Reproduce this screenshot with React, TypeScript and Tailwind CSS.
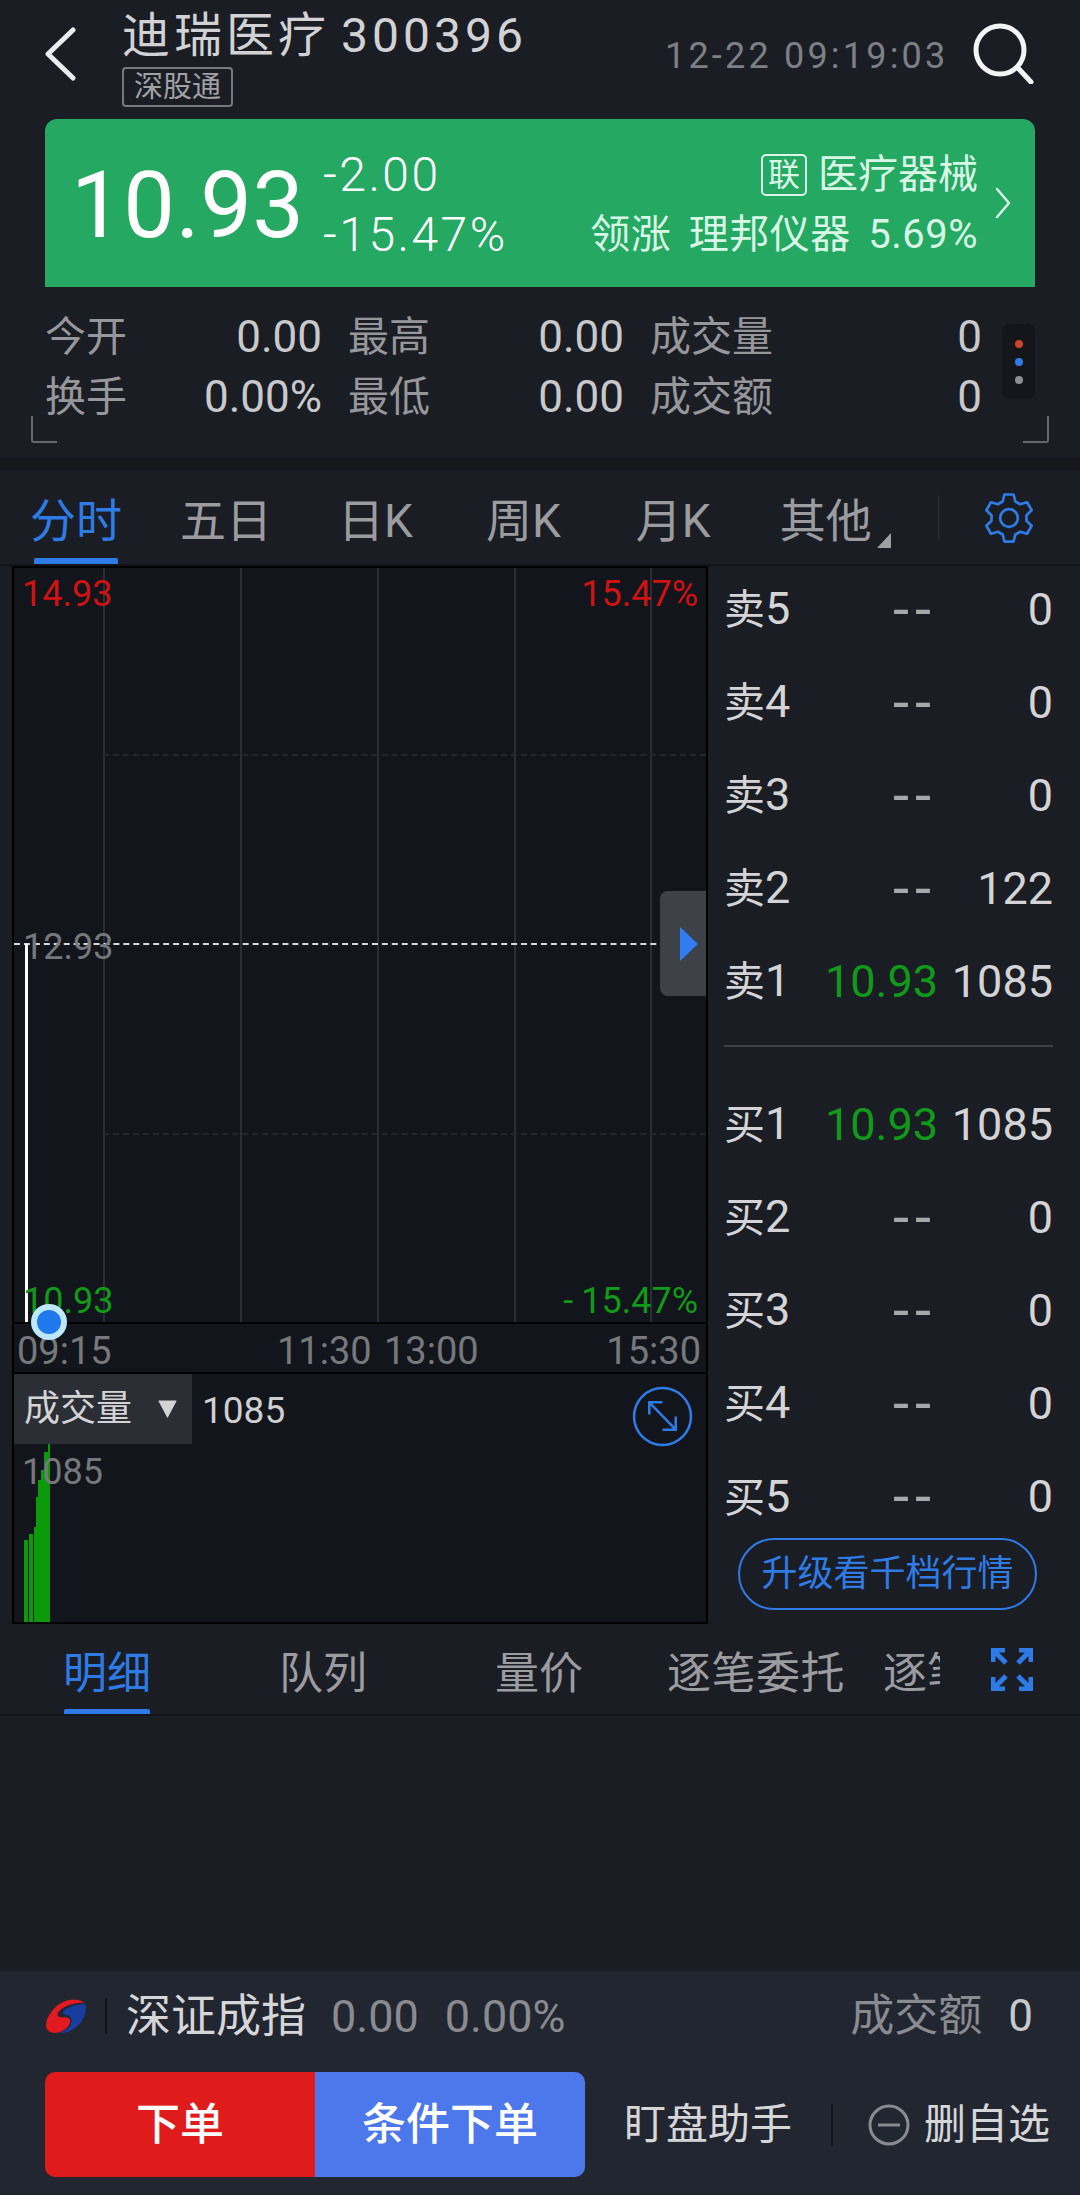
const SELLS = [
  ["卖5", "--", "0"],
  ["卖4", "--", "0"],
  ["卖3", "--", "0"],
  ["卖2", "--", "122"],
  ["卖1", "10.93", "1085"],
];

const BUYS = [
  ["买1", "10.93", "1085"],
  ["买2", "--", "0"],
  ["买3", "--", "0"],
  ["买4", "--", "0"],
  ["买5", "--", "0"],
];

const VOLUME_BARS = [
  [4, 82], [1, 0], [4, 88], [1, 0], [2, 95], [2, 125], [3, 142], [3, 152], [4, 170], [2, 178],
];

// six flat teeth round a centre, same outline as the reference gear
const GEAR_PATH =
  [-90, -30, 30, 90, 150, 210]
    .map((a) => {
      const pt = (deg: number, r: number) => {
        const rad = (deg * Math.PI) / 180;
        return `${(24 + r * Math.cos(rad)).toFixed(2)} ${(24 + r * Math.sin(rad)).toFixed(2)}`;
      };
      return `${pt(a - 21, 17)} L${pt(a - 11, 23)} L${pt(a + 11, 23)} L${pt(a + 21, 17)}`;
    })
    .map((s, i) => (i === 0 ? `M${s}` : `L${s}`))
    .join(" ") + " Z";

function BookRow({ row, short }: { row: string[]; short?: boolean }) {
  const [label, price, vol] = row;
  return (
    <div className={`flex pl-[16px] pr-[27px] text-[45px] leading-[45px] text-[#d4d4d6] ${short ? "h-[70px] items-start pt-[24px]" : "h-[93px] items-center"}`}>
      <span className="w-[101px] shrink-0 whitespace-nowrap text-[41px]">
        {label[0]}
        <span className="text-[45px]">{label[1]}</span>
      </span>
      {price === "--" ? (
        <span className="-mr-[4px] w-[112px] shrink-0 whitespace-nowrap text-right text-[58px] tracking-[6px] text-[#a8a8ab]">--</span>
      ) : (
        <span className="w-[106px] shrink-0 whitespace-nowrap text-right text-[#119a1a]">{price}</span>
      )}
      <span className="flex-1 text-right">{vol}</span>
    </div>
  );
}

function Stat({ label, value }: { label: string; value: string }) {
  return (
    <div className="flex items-center justify-between">
      <span className="text-[41px] text-[#97979b]">{label}</span>
      <span className="text-[44px] text-[#c9c9cc]">{value}</span>
    </div>
  );
}

function Header() {
  return (
    <header className="flex h-[119px] items-start bg-[#1a1d24]">
      <svg className="ml-[44px] mt-[27px] shrink-0" width="32" height="54" viewBox="0 0 32 54" fill="none" stroke="#ececee" strokeWidth="5" strokeLinecap="round" strokeLinejoin="round">
        <path d="M29 3 4 27l25 24" />
      </svg>
      <div className="ml-[46px] w-[480px] pt-[11px]">
        <div className="flex whitespace-nowrap text-[48px] leading-[50px] text-[#d2d2d5]">
          <span className="tracking-[4px]">迪瑞医疗</span>
          <span className="ml-[11px] tracking-[4px]">300396</span>
        </div>
        <div className="mt-[6px] flex h-[40px] w-[111px] items-center justify-center rounded-[4px] border-2 border-[#77797d] text-[29px] leading-none text-[#a1a1a5]">深股通</div>
      </div>
      <div className="ml-[63px] mt-[36px] w-[284px] whitespace-nowrap text-[36px] leading-[40px] tracking-[3.2px] text-[#7e7f84]">12-22 09:19:03</div>
      <svg className="ml-[23px] mt-[22px] shrink-0" width="62" height="62" viewBox="0 0 62 62" fill="none" stroke="#f4f4f5" strokeWidth="5" strokeLinecap="round">
        <circle cx="28" cy="28" r="24" />
        <path d="m46 46 13 14" />
      </svg>
    </header>
  );
}

function QuoteCard() {
  return (
    <section className="mx-[45px] flex h-[168px] items-center rounded-t-[12px] bg-[#24a862] pl-[26px] pr-[24px] text-white">
      <div className="w-[252px] shrink-0 pt-[5px] text-[92px] font-normal leading-none tracking-[0.5px]">10.93</div>
      <div className="pt-[4px] text-[48px] font-light leading-[60px] tracking-[2.5px]">
        <div>-2.00</div>
        <div>-15.47%</div>
      </div>
      <div className="ml-auto pt-[4px] text-right text-[#d9f7e6]">
        <div className="flex items-center justify-end gap-[11px] text-[40px] leading-[60px]">
          <span className="flex h-[42px] w-[46px] items-center justify-center rounded-[5px] border-2 border-[#d9f7e6] text-[32px] leading-none">联</span>
          <span>医疗器械</span>
        </div>
        <div className="whitespace-nowrap text-[40px] leading-[60px] tracking-[0.5px] [word-spacing:7px]">领涨 理邦仪器 5.69%</div>
      </div>
      <svg className="ml-[17px] shrink-0" width="16" height="32" viewBox="0 0 16 32" fill="none" stroke="#d9f7e6" strokeWidth="2.5" strokeLinecap="round" strokeLinejoin="round">
        <path d="m2 2 12 14L2 30" />
      </svg>
    </section>
  );
}

function Stats() {
  return (
    <section className="relative flex h-[171px] bg-[#1a1d24] pl-[45px] pt-[20px]">
      <div className="grid h-fit grid-cols-[277px_276px_332px] gap-x-[26px] leading-[60px]">
        <Stat label="今开" value="0.00" />
        <Stat label="最高" value="0.00" />
        <Stat label="成交量" value="0" />
        <Stat label="换手" value="0.00%" />
        <Stat label="最低" value="0.00" />
        <Stat label="成交额" value="0" />
      </div>
      <div className="ml-[20px] mt-[17px] flex h-[75px] w-[33px] flex-col items-center justify-center gap-[10px] rounded-[8px] bg-[#14161b]">
        <span className="h-[8px] w-[8px] rounded-full bg-[#c8452f]" />
        <span className="h-[8px] w-[8px] rounded-full bg-[#2f7be5]" />
        <span className="h-[8px] w-[8px] rounded-full bg-[#8e8e92]" />
      </div>
      <span className="absolute bottom-[15px] left-[31px] h-[27px] w-[26px] rounded-bl-[3px] border-b-2 border-l-2 border-[#66686d]" />
      <span className="absolute bottom-[15px] right-[31px] h-[27px] w-[26px] rounded-br-[3px] border-b-2 border-r-2 border-[#66686d]" />
    </section>
  );
}

function ChartTabs() {
  return (
    <nav className="flex h-[96px] items-start border-b-2 border-[#13151a] bg-[#1a1d24] text-[46px] leading-none text-[#9c9ca0]">
      <div className="ml-[30px] mt-[28px] flex h-[66px] w-[92px] flex-col items-center justify-between whitespace-nowrap text-[#2f7be5]">
        <span>分时</span>
        <span className="h-[6px] w-[84px] rounded-t-[2px] bg-[#2f7be5]" />
      </div>
      <span className="ml-[58px] mt-[28px] whitespace-nowrap">五日</span>
      <span className="ml-[66px] mt-[28px] whitespace-nowrap">日K</span>
      <span className="ml-[73px] mt-[28px] whitespace-nowrap">周K</span>
      <span className="ml-[75px] mt-[28px] whitespace-nowrap">月K</span>
      <span className="ml-[69px] mt-[28px] whitespace-nowrap">其他</span>
      <span className="ml-[5px] mt-[63px] h-0 w-0 border-b-[15px] border-l-[14px] border-b-[#a0a0a4] border-l-transparent" />
      <span className="ml-[47px] mt-[25px] h-[45px] w-[1px] bg-[#2b2e36]" />
      <svg className="ml-[45px] mt-[23px] shrink-0" width="50" height="50" viewBox="0 0 48 48" fill="none" stroke="#2f7be5" strokeWidth="2.6" strokeLinejoin="round">
        <path d={GEAR_PATH} />
        <circle cx="24" cy="24" r="8.5" />
      </svg>
    </nav>
  );
}

function PriceChart() {
  return (
    <div className="relative h-[756px] border-b-2 border-black bg-[#12151b] text-[36px] leading-none">
      <span className="absolute inset-y-0 left-[89px] w-[2px] bg-[#2a2d35]" />
      <span className="absolute inset-y-0 left-[226px] w-[2px] bg-[#2a2d35]" />
      <span className="absolute inset-y-0 left-[363px] w-[2px] bg-[#2a2d35]" />
      <span className="absolute inset-y-0 left-[500px] w-[2px] bg-[#2a2d35]" />
      <span className="absolute inset-y-0 left-[636px] w-[2px] bg-[#2a2d35]" />
      <span className="absolute left-[89px] right-0 top-[186px] border-t-2 border-dashed border-[#23262d]" />
      <span className="absolute left-[89px] right-0 top-[565px] border-t-2 border-dashed border-[#23262d]" />
      <span className="absolute inset-x-0 top-[375px] border-t-2 border-dashed border-[#d8d8da]" />
      <span className="absolute bottom-0 left-[11px] top-[376px] w-[3px] bg-white" />
      <span className="absolute left-[8px] top-[8px] text-[#cf1212]">14.93</span>
      <span className="absolute right-[8px] top-[8px] text-[#cf1212]">15.47%</span>
      <span className="absolute left-[9px] top-[361px] text-[#77787c]">12.93</span>
      <span className="absolute bottom-[3px] left-[9px] text-[#119a1a]">10.93</span>
      <span className="absolute bottom-[3px] right-[8px] text-[#119a1a]">
        <span className="mr-[8px]">-</span>15.47%
      </span>
      <div className="absolute right-0 top-[323px] flex h-[105px] w-[46px] items-center justify-end rounded-l-[8px] bg-[#3e4147] pr-[8px]">
        <span className="h-0 w-0 border-y-[17px] border-l-[18px] border-y-transparent border-l-[#2f7df0]" />
      </div>
      <span className="absolute left-[17px] top-[736px] z-10 flex h-[36px] w-[36px] items-center justify-center rounded-full bg-[#bde7fb]">
        <span className="h-[24px] w-[24px] rounded-full bg-[#1f78ec]" />
      </span>
    </div>
  );
}

function VolumePanel() {
  return (
    <div className="relative h-[250px] border-b-2 border-black bg-[#12151b]">
      <div className="flex h-[70px] items-center">
        <div className="flex h-[70px] w-[178px] items-center bg-[#2b2e35] pl-[10px] text-[36px] leading-none text-[#d4d4d6]">
          成交量
          <svg className="ml-[24px]" width="23" height="18" viewBox="0 0 20 17" fill="#d4d4d6">
            <path d="M2 1h16l-8 15z" stroke="#d4d4d6" strokeLinejoin="round" />
          </svg>
        </div>
        <span className="ml-[10px] pt-[2px] text-[37px] leading-none text-[#cfcfd2]">1085</span>
        <svg className="ml-auto mr-[13px] mt-[14px]" width="61" height="61" viewBox="0 0 60 60" fill="none" stroke="#2f7be5" strokeWidth="2.5">
          <circle cx="30" cy="30" r="28" />
          <path d="m17 16 26 27M17 28V16h13M43 30v13H30" />
        </svg>
      </div>
      <div className="absolute bottom-0 left-[10px] flex items-end">
        {VOLUME_BARS.map(([w, h], i) => (
          <span key={i} className="bg-[#0a9a0a]" style={{ width: w, height: h }} />
        ))}
      </div>
      <span className="absolute left-[8px] top-[80px] text-[36px] leading-none text-[#77787c]">1085</span>
    </div>
  );
}

function DetailTabs() {
  return (
    <nav className="flex h-[92px] items-start border-b-2 border-[#13151a] bg-[#1a1d24] text-[44px] leading-none text-[#9c9ca0]">
      <div className="ml-[64px] mt-[28px] flex h-[62px] w-[86px] flex-col items-center justify-between text-[#2f7be5]">
        <span className="whitespace-nowrap">明细</span>
        <span className="h-[5px] w-[86px] rounded-t-[2px] bg-[#2f7be5]" />
      </div>
      <span className="ml-[129px] mt-[28px] whitespace-nowrap">队列</span>
      <span className="ml-[128px] mt-[28px] whitespace-nowrap">量价</span>
      <span className="ml-[84px] mt-[28px] whitespace-nowrap tracking-[0.5px]">逐笔委托</span>
      <span className="ml-[38px] mt-[28px] w-[57px] overflow-hidden whitespace-nowrap">逐笔</span>
      <svg className="ml-[51px] mt-[24px] shrink-0" width="42" height="43" viewBox="0 0 42 43" fill="none" stroke="#2f7be5" strokeWidth="5">
        <path d="M2 14V2h12M2 2l13 13M40 14V2H28M40 2 27 15M2 29v12h12M2 41l13-13M40 29v12H28M40 41 27 28" />
      </svg>
    </nav>
  );
}

function BottomBar() {
  return (
    <footer className="h-[225px] bg-[#222631]">
      <div className="flex h-[101px] items-center whitespace-nowrap pb-[11px] pl-[45px] pr-[47px] text-[44px] leading-none">
        <svg width="42" height="37" viewBox="30 25 126 110">
          <path d="M148 38C120 20 75 30 50 65 30 90 25 120 50 128 75 135 110 110 105 90 100 78 80 85 70 80 62 72 75 55 105 45 120 40 135 38 148 38Z" fill="#e2191f" />
          <path d="M150 42c10 28-10 68-50 83-15 6-25 5-28 3 23-3 43-23 36-43-4-10-18-7-24-13-4-12 26-27 66-30Z" fill="#173e9e" />
        </svg>
        <span className="ml-[18px] h-[36px] w-[2px] bg-[#12141a]" />
        <span className="ml-[19px] text-[45px] text-[#d6d6d9]">深证成指</span>
        <span className="ml-[25px] text-[45px] text-[#8a8b90]">0.00</span>
        <span className="ml-[26px] text-[45px] text-[#8a8b90]">0.00%</span>
        <span className="ml-auto text-[#8a8b90]">成交额</span>
        <span className="ml-[26px] text-[44px] text-[#c9c9cc]">0</span>
      </div>
      <div className="flex items-center whitespace-nowrap pl-[45px]">
        <div className="flex h-[105px] w-[540px] overflow-hidden rounded-[10px] text-[44px] font-medium leading-none text-white">
          <span className="flex w-[270px] items-center justify-center bg-[#e01b1b]">下单</span>
          <span className="flex w-[270px] items-center justify-center bg-[#4d78ec]">条件下单</span>
        </div>
        <span className="ml-[39px] text-[42px] leading-none text-[#d6d6d9]">盯盘助手</span>
        <span className="ml-[39px] h-[42px] w-[2px] bg-[#12141a]" />
        <svg className="ml-[35px]" width="42" height="44" viewBox="0 0 42 44" fill="none" stroke="#8a8b90" strokeWidth="3">
          <circle cx="21" cy="22" r="19" />
          <path d="M10 22h22" />
        </svg>
        <span className="ml-[14px] text-[42px] leading-none text-[#d6d6d9]">删自选</span>
      </div>
    </footer>
  );
}

export default function App() {
  return (
    <div className="h-[2195px] w-[1080px] overflow-hidden bg-[#1a1d24] font-['Roboto','Noto_Sans_CJK_SC',sans-serif]">
      <Header />
      <QuoteCard />
      <Stats />
      <div className="h-[12px] bg-[#14161a]" />
      <ChartTabs />

      <div className="flex h-[1058px]">
        <div className="ml-[12px] w-[696px] shrink-0 border-x-2 border-t-2 border-black">
          <PriceChart />
          <div className="relative flex h-[50px] items-center border-b-2 border-black bg-[#12151b] pt-[6px] text-[38px] leading-none text-[#77787c]">
            <span className="absolute left-[3px]">09:15</span>
            <span className="absolute left-[263px]">11:30</span>
            <span className="absolute left-[370px]">13:00</span>
            <span className="absolute right-[5px]">15:30</span>
          </div>
          <VolumePanel />
        </div>
        <div className="flex-1">
          <div className="-mt-[3px]">
            {SELLS.map((r) => (
              <BookRow key={r[0]} row={r} />
            ))}
          </div>
          <div className="ml-[16px] mr-[27px] mt-[17px] h-[2px] bg-[#3f424a]" />
          <div className="mt-[31px]">
            {BUYS.map((r, i) => (
              <BookRow key={r[0]} row={r} short={i === BUYS.length - 1} />
            ))}
          </div>
          <div className="ml-[30px] mt-[18px] flex h-[72px] w-[299px] items-center justify-center rounded-full border-2 border-[#2f7be5] text-[36px] leading-none text-[#2f7be5]">
            升级看千档行情
          </div>
        </div>
      </div>

      <DetailTabs />
      <div className="h-[255px] bg-[#1a1d24]" />
      <BottomBar />
    </div>
  );
}
